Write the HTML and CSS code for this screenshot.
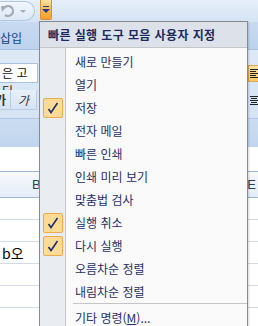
FILE: index.html
```html
<!DOCTYPE html>
<html lang="ko">
<head>
  <meta charset="utf-8">
  <title>빠른 실행 도구 모음 사용자 지정</title>
  <link rel="stylesheet" href="styles.css">
</head>
<body>

  <div class="qat">
    <div class="undo">
      <svg class="undo-icon" width="14" height="14" viewBox="0 0 14 14">
        <path d="M3 4 A5 5 0 1 1 4 11" fill="none" stroke="#a3abb5" stroke-width="2.2"/>
        <path d="M0 2 L6 2 L1 8 Z" fill="#a3abb5"/>
      </svg>
      <span class="mini-arrow"></span>
    </div>
    <div class="qat-drop">
      <svg width="8" height="7" viewBox="0 0 8 7">
        <rect x="1" y="0" width="6" height="1" fill="#1d3f8a"/>
        <path d="M0 3 L8 3 L4 7 Z" fill="#1d3f8a"/>
      </svg>
    </div>
  </div>

  <div class="tabs">
    <span class="tab">삽입</span>
  </div>

  <div class="ribbon">
    <div class="rb-line rb-fonts">
      <div class="font-box">은 고딕</div>
      <div class="align-btn on">
        <svg width="9" height="9" viewBox="0 0 9 9">
          <rect x="1" y="0" width="8" height="1" fill="#222"/>
          <rect x="1" y="2" width="6" height="1" fill="#222"/>
          <rect x="1" y="4" width="8" height="1" fill="#222"/>
          <rect x="1" y="6" width="6" height="1" fill="#222"/>
          <rect x="1" y="8" width="8" height="1" fill="#222"/>
        </svg>
      </div>
    </div>
    <div class="rb-line rb-fmt">
      <div class="fmt-btns">
        <span class="fmt bold"><b>가</b></span>
        <span class="fmt italic">가</span>
      </div>
      <div class="align-btn">
        <svg width="9" height="9" viewBox="0 0 9 9">
          <rect x="1" y="0" width="8" height="1" fill="#222"/>
          <rect x="2" y="2" width="6" height="1" fill="#222"/>
          <rect x="1" y="4" width="8" height="1" fill="#222"/>
          <rect x="2" y="6" width="6" height="1" fill="#222"/>
          <rect x="1" y="8" width="8" height="1" fill="#222"/>
        </svg>
      </div>
    </div>
    <div class="rb-label"></div>
  </div>

  <div class="formula"></div>

  <div class="colhead">
    <span class="col">B</span>
    <span class="col">E</span>
  </div>

  <div class="grid">
    <div class="cell"></div>
    <div class="cell"></div>
    <div class="cell text">b오</div>
    <div class="cell"></div>
    <div class="cell"></div>
    <div class="cell"></div>
  </div>

  <div class="menu">
    <div class="menu-head">빠른 실행 도구 모음 사용자 지정</div>
    <div class="menu-body">
      <div class="item"><span class="check"></span>새로 만들기</div>
      <div class="item"><span class="check"></span>열기</div>
      <div class="item"><span class="check on"><svg width="12" height="12" viewBox="0 0 12 12"><path d="M1.5 7 L4 10.5 L10.5 1" fill="none" stroke="#1c2f6e" stroke-width="1.6"/></svg></span>저장</div>
      <div class="item"><span class="check"></span>전자 메일</div>
      <div class="item"><span class="check"></span>빠른 인쇄</div>
      <div class="item"><span class="check"></span>인쇄 미리 보기</div>
      <div class="item"><span class="check"></span>맞춤법 검사</div>
      <div class="item"><span class="check on"><svg width="12" height="12" viewBox="0 0 12 12"><path d="M1.5 7 L4 10.5 L10.5 1" fill="none" stroke="#1c2f6e" stroke-width="1.6"/></svg></span>실행 취소</div>
      <div class="item"><span class="check on"><svg width="12" height="12" viewBox="0 0 12 12"><path d="M1.5 7 L4 10.5 L10.5 1" fill="none" stroke="#1c2f6e" stroke-width="1.6"/></svg></span>다시 실행</div>
      <div class="item"><span class="check"></span>오름차순 정렬</div>
      <div class="item"><span class="check"></span>내림차순 정렬</div>
      <div class="sep"></div>
      <div class="item"><span class="check"></span>기타 명령(<u>M</u>)...</div>
    </div>
  </div>

</body>
</html>
```

FILE: styles.css
```css
* { box-sizing: border-box; margin: 0; padding: 0; }
body {
  width: 258px; height: 326px;
  overflow: hidden;
  position: relative;
  background: #fff;
  font-family: "Noto Sans CJK KR", "Noto Sans", sans-serif;
  font-size: 12px;
}

/* quick access toolbar */
.qat {
  height: 22px;
  display: flex; align-items: flex-start;
  background: linear-gradient(#e6effa, #d5e3f4);
}
.undo {
  width: 35px; height: 20px; margin-top: 1px;
  display: flex; align-items: center;
  border: 1px solid #b3c7e0; border-left: none;
  border-radius: 0 10px 10px 0;
  background: linear-gradient(#f1f6fc, #dce8f6);
}
.undo-icon { margin-left: 1px; }
.mini-arrow {
  margin-left: 5px;
  border-left: 3px solid transparent; border-right: 3px solid transparent;
  border-top: 3px solid #a3abb5;
}
.qat-drop {
  width: 12px; height: 20px; margin-left: 5px;
  display: flex; justify-content: center; align-items: center;
  background: linear-gradient(#fde3a0, #f9b54a 55%, #f7a12d);
  border: 1px solid #d2913f; border-top: none;
  border-radius: 0 0 2px 2px;
}

/* tabs row */
.tabs {
  height: 28px;
  background: linear-gradient(#c8daf0, #bcd2ed);
  border-bottom: 1px solid #a9c2e2;
  display: flex; align-items: flex-end;
}
.tab {
  margin-bottom: 3px;
  font-size: 12px; color: #15428b;
}

/* ribbon */
.ribbon {
  height: 97px;
  display: flex; flex-direction: column;
  background: linear-gradient(#dde9f7, #d2e1f3);
}
.rb-line { display: flex; justify-content: space-between; align-items: center; }
.rb-fonts { margin-top: 13px; height: 20px; }
.font-box {
  width: 38px; height: 20px;
  padding-left: 2px;
  background: #fff;
  border: 1px solid #abc2df; border-left: none;
  line-height: 18px; color: #111;
}
.align-btn {
  width: 10px; height: 17px;
  display: flex; align-items: center;
  border: 1px solid transparent; border-right: none;
}
.align-btn.on {
  background: linear-gradient(#fee3a6, #fcc866);
  border-color: #e1a750;
}
.rb-fmt { margin-top: 7px; height: 20px; }
.fmt-btns {
  display: flex; height: 20px;
  background: linear-gradient(#e9f0f9, #d6e3f3);
  border-bottom: 1px solid #b8cce5;
}
.fmt {
  display: flex; align-items: center;
  font-size: 12px; color: #333;
  border-right: 1px solid #b8cce5;
}
.fmt.bold { width: 11px; overflow: hidden; }
.fmt.bold b { margin-left: -5px; }
.fmt.italic { width: 26px; justify-content: center; font-style: italic; }
.rb-label {
  margin-top: auto; height: 29px;
  background: linear-gradient(#cadcf1, #c1d6ee);
  border-top: 1px solid #b2c9e6;
}

/* sheet */
.formula {
  height: 25px;
  background: #fff;
  border-bottom: 1px solid #9db5d3;
}
.colhead {
  height: 26px;
  display: flex; justify-content: space-between; align-items: center;
  padding: 0 2px 0 32px;
  background: linear-gradient(#f7f9fc, #e4ecf7);
  border-bottom: 1px solid #9db5d3;
  font-family: "Liberation Sans", sans-serif;
  font-size: 13px; color: #27415f;
}
.grid { display: flex; flex-direction: column; }
.cell {
  height: 22px;
  border-bottom: 1px solid #d4dbe8;
  font-size: 14px; color: #000;
  line-height: 22px; padding-left: 2px;
}

/* menu */
.menu {
  position: absolute; left: 39px; top: 21px;
  width: 209px; height: 320px;
  border: 1px solid #8a8a8a;
  background: #fafafa;
  box-shadow: 1px 1px 2px rgba(0,0,0,0.15);
}
.menu-head {
  height: 26px;
  padding-left: 8px;
  line-height: 25px;
  font-weight: bold; letter-spacing: 0.4px;
  color: #1b2b5e;
  background: #dde2ea;
  border-bottom: 1px solid #c5c5c5;
}
.menu-body {
  height: 292px;
  padding-top: 2px;
  background: linear-gradient(to right, #e9edf1 0 25px, #c5c5c5 25px 26px, #fafafa 26px);
}
.item {
  height: 23px;
  display: flex; align-items: center;
  color: #1f2f66;
}
.check {
  flex: none;
  width: 20px; height: 20px;
  margin-left: 3px; margin-right: 12px;
  display: flex; justify-content: center; align-items: center;
  border: 1px solid transparent;
}
.check.on {
  background: #fddb96;
  border-color: #efa94a;
  border-radius: 2px;
}
.item u { text-decoration: underline; }
.sep {
  height: 1px;
  margin: 0 0 2px 33px;
  background: #c5c5c5;
}
```
